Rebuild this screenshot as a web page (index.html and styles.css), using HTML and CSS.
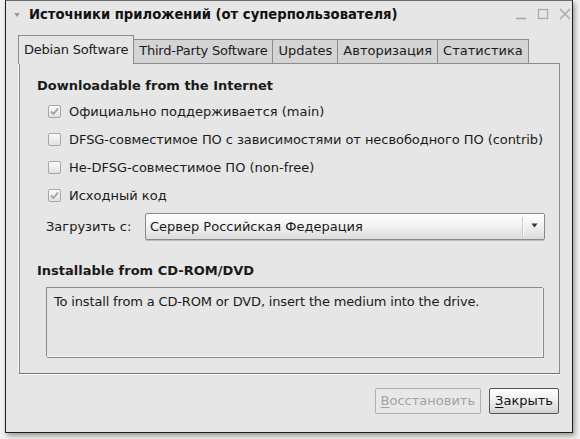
FILE: index.html
```html
<!DOCTYPE html>
<html lang="ru">
<head>
<meta charset="utf-8">
<title>Источники приложений</title>
<link rel="stylesheet" href="styles.css">
</head>
<body>
<div class="window">
  <div class="titlebar">
    <span class="menu-arrow"></span>
    <span class="title">Источники приложений (от суперпользователя)</span>
    <span class="wm-buttons">
      <svg width="12" height="12" viewBox="0 0 12 12"><path d="M1 10.5H11" stroke="#a8a8a8" stroke-width="1.6"/></svg>
      <svg width="12" height="12" viewBox="0 0 12 12"><rect x="1.5" y="1.5" width="9" height="9" fill="none" stroke="#a8a8a8" stroke-width="1.2"/></svg>
      <svg width="12" height="12" viewBox="0 0 12 12"><path d="M1 1L11 11M11 1L1 11" stroke="#a8a8a8" stroke-width="1.4"/></svg>
    </span>
  </div>

  <div class="notebook">
    <div class="tabs">
      <div class="tab active narrow">Debian Software</div>
      <div class="tab narrow">Third-Party Software</div>
      <div class="tab">Updates</div>
      <div class="tab">Авторизация</div>
      <div class="tab">Статистика</div>
    </div>
    <div class="panel">
      <div class="heading first">Downloadable from the Internet</div>
      <div class="check-row">
        <span class="cb checked"><svg width="9" height="9" viewBox="0 0 9 9"><path d="M1 4.5L3.5 7L8 1.5" fill="none" stroke="#a0a0a0" stroke-width="1.8"/></svg></span>
        <span class="lbl">Официально поддерживается (main)</span>
      </div>
      <div class="check-row">
        <span class="cb"></span>
        <span class="lbl tight">DFSG-совместимое ПО с зависимостями от несвободного ПО (contrib)</span>
      </div>
      <div class="check-row">
        <span class="cb"></span>
        <span class="lbl">Не-DFSG-совместимое ПО (non-free)</span>
      </div>
      <div class="check-row">
        <span class="cb checked"><svg width="9" height="9" viewBox="0 0 9 9"><path d="M1 4.5L3.5 7L8 1.5" fill="none" stroke="#a0a0a0" stroke-width="1.8"/></svg></span>
        <span class="lbl">Исходный код</span>
      </div>
      <div class="combo-row">
        <span class="combo-label">Загрузить с:</span>
        <div class="combo">
          <span class="combo-text">Сервер Российская Федерация</span>
          <span class="combo-sep"></span>
          <span class="combo-arrow"><svg width="7" height="5" viewBox="0 0 7 5"><path d="M0.5 0.5H6.5L3.5 4.5Z" fill="#333"/></svg></span>
        </div>
      </div>
      <div class="heading second">Installable from CD-ROM/DVD</div>
      <div class="cdbox">To install from a CD-ROM or DVD, insert the medium into the drive.</div>
    </div>
  </div>

  <div class="buttons">
    <div class="btn disabled"><u>В</u>осстановить</div>
    <div class="btn"><u>З</u>акрыть</div>
  </div>
</div>
</body>
</html>
```

FILE: styles.css
```css
html, body {
  margin: 0;
  padding: 0;
}
body {
  background: #f2f2f2;
  width: 580px;
  height: 439px;
  overflow: hidden;
  font-family: "DejaVu Sans", "Liberation Sans", sans-serif;
  font-size: 13px;
  color: #1a1a1a;
}
.window {
  margin-left: 5px;
  width: 566px;
  height: 431px;
  border: 1px solid #1e1e1e;
  border-top-color: #6a6a6a;
  background: #e6e6e6;
  box-shadow: 2px 3px 5px rgba(40, 60, 30, 0.45);
  display: flex;
  flex-direction: column;
}
.titlebar {
  height: 29px;
  display: flex;
  align-items: center;
  padding-left: 8px;
  padding-right: 1px;
}
.menu-arrow {
  width: 0;
  height: 0;
  border-left: 3px solid transparent;
  border-right: 3px solid transparent;
  border-top: 4px solid #9a9a9a;
  margin-right: 9px;
  margin-top: -1px;
}
.title {
  font-weight: bold;
  font-size: 13.2px;
  color: #111;
  flex: 1;
  margin-top: -3px;
}
.wm-buttons {
  display: flex;
  gap: 10px;
  margin-top: -3px;
}
.notebook {
  margin: 6px 12px 0 12px;
  display: flex;
  flex-direction: column;
}
.tabs {
  display: flex;
  align-items: flex-end;
  height: 27px;
}
.tab {
  height: 23px;
  line-height: 22px;
  padding: 0 5px;
  background: #d4d4d4;
  border: 1px solid #8c8c8c;
  border-bottom: none;
  border-left: none;
  color: #1a1a1a;
  white-space: nowrap;
}
.tab.narrow {
  letter-spacing: -0.22px;
}
.tab.active {
  height: 27px;
  line-height: 27px;
  background: #e6e6e6;
  border-left: 1px solid #8c8c8c;
  border-right: 1px solid #8c8c8c;
  margin-bottom: -1px;
  position: relative;
  z-index: 1;
  padding: 0 5px 1px 5px;
}
.panel {
  height: 309px;
  border: 1px solid #8c8c8c;
  border-left-color: #f6f6f6;
  border-top-color: #8c8c8c;
  border-bottom-color: #777;
  box-shadow: inset 1px 0 0 #8c8c8c, 0 1px 0 #fafafa;
  padding-left: 18px;
  padding-right: 0;
  display: flex;
  flex-direction: column;
}
.heading {
  font-weight: bold;
  font-size: 13px;
  height: 16px;
  line-height: 16px;
}
.heading.first {
  margin-top: 14px;
  margin-bottom: 3px;
}
.check-row {
  height: 28px;
  display: flex;
  align-items: center;
  padding-left: 11px;
  white-space: nowrap;
}
.lbl.tight {
  letter-spacing: -0.06px;
}
.cb {
  width: 11px;
  height: 11px;
  border: 1px solid #a6a6a6;
  border-radius: 2px;
  background: linear-gradient(#fafafa, #e2e2e2);
  display: flex;
  align-items: center;
  justify-content: center;
  margin-right: 8px;
  flex: none;
}
.combo-row {
  display: flex;
  align-items: center;
  margin-top: 4px;
  height: 27px;
  padding-left: 9px;
}
.combo-label {
  width: 99px;
}
.combo {
  width: 398px;
  height: 25px;
  border: 1px solid #8a8a8a;
  border-radius: 2px;
  background: linear-gradient(#ffffff, #f1f1f1 50%, #dcdcdc);
  display: flex;
  align-items: center;
  box-shadow: 0 1px 0 #bdbdbd;
}
.combo-text {
  flex: 1;
  padding-left: 4px;
}
.combo-sep {
  width: 1px;
  height: 19px;
  background: #c8c8c8;
  border-right: 1px solid #fff;
}
.combo-arrow {
  width: 20px;
  display: flex;
  justify-content: center;
  align-items: center;
  margin-top: -3px;
}
.heading.second {
  margin-top: 23px;
}
.cdbox {
  margin-top: 8px;
  margin-left: 9px;
  width: 488px;
  height: 62px;
  border: 1px solid #8a8a8a;
  border-right-color: #f4f4f4;
  border-bottom-color: #f4f4f4;
  box-shadow: 1px 1px 0 #8a8a8a;
  padding: 6px 0 0 7px;
  line-height: 15px;
  letter-spacing: -0.16px;
}
.buttons {
  display: flex;
  justify-content: flex-end;
  gap: 8px;
  margin-top: 14px;
  padding-right: 13px;
}
.btn {
  height: 24px;
  line-height: 24px;
  padding: 0 5px;
  border: 1px solid #555;
  border-radius: 2px;
  background: linear-gradient(#ffffff, #eeeeee 50%, #d2d2d2);
  color: #111;
  font-size: 13px;
}
.btn.disabled {
  border-color: #b0b0b0;
  background: #e8e8e8;
  color: #a2a2a2;
}
.btn u {
  text-decoration-thickness: 1px;
  text-underline-offset: 2px;
}
```
